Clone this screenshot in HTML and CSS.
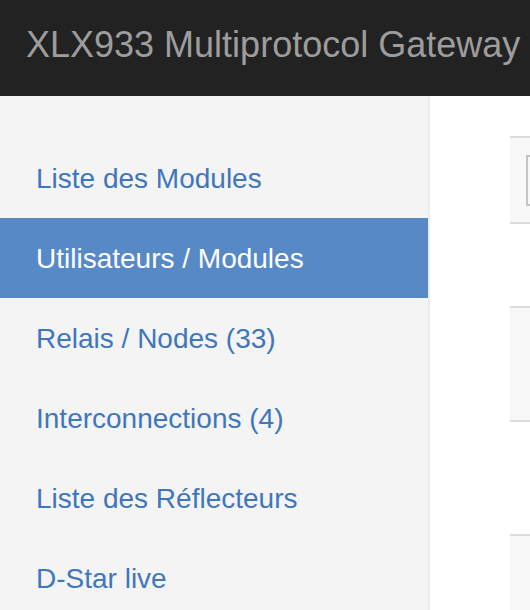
FILE: index.html
```html
<!DOCTYPE html>
<html lang="fr">

<head>
    <meta charset="UTF-8">
    <meta name="viewport" content="width=device-width, initial-scale=1.0">
    <title>XLX933 Multiprotocol Gateway</title>
    <link rel="stylesheet" href="styles.css">
</head>

<body>
    <div class="navbar">
        <a class="brand" href="#">XLX933 Multiprotocol Gateway</a>
    </div>
    <div class="page">
        <div class="sidebar">
            <ul class="nav">
                <li><a href="#">Liste des Modules</a></li>
                <li class="active"><a href="#">Utilisateurs / Modules</a></li>
                <li><a href="#">Relais / Nodes (33)</a></li>
                <li><a href="#">Interconnections (4)</a></li>
                <li><a href="#">Liste des Réflecteurs</a></li>
                <li><a href="#">D-Star live</a></li>
            </ul>
        </div>
        <div class="main">
            <table class="table">
                <tr class="row-head">
                    <td><div class="filter"></div></td>
                </tr>
                <tr class="row-short">
                    <td></td>
                </tr>
                <tr>
                    <td></td>
                </tr>
                <tr>
                    <td></td>
                </tr>
                <tr>
                    <td></td>
                </tr>
            </table>
        </div>
    </div>
</body>

</html>
```

FILE: styles.css
```css
html,
body {
    margin: 0;
    height: 100%;
    overflow: hidden;
}

body {
    font-family: "Liberation Sans", Arial, Helvetica, sans-serif;
    background: #fff;
}

.navbar {
    height: 96px;
    box-sizing: border-box;
    padding: 25px 26px 0;
    background: #222;
}

.brand {
    display: block;
    font-size: 36px;
    line-height: 40px;
    color: #9d9d9d;
    text-decoration: none;
    white-space: nowrap;
}

.page {
    display: flex;
    height: calc(100% - 96px);
}

.sidebar {
    flex: 0 0 428px;
    padding-top: 42px;
    background: #f4f4f4;
    border-right: 2px solid #ececec;
}

.nav {
    list-style: none;
    margin: 0;
    padding: 0;
}

.nav a {
    display: block;
    height: 80px;
    line-height: 81px;
    padding-left: 36px;
    font-size: 28px;
    color: #3f77bd;
    text-decoration: none;
    white-space: nowrap;
}

.nav .active a {
    background: #5689c5;
    color: #fff;
}

.main {
    flex: 1;
    overflow: hidden;
    padding: 40px 0 0 80px;
}

.table {
    width: 1000px;
    border-collapse: collapse;
    border-top: 2px solid #dcdcdc;
}

.table td {
    padding: 0;
    height: 112px;
    border-bottom: 2px solid #dcdcdc;
}

.table tr:nth-child(odd) td {
    background: #f8f8f8;
}

.table .row-head td {
    height: 84px;
    padding-left: 16px;
}

.table .row-short td {
    height: 82px;
}

.filter {
    width: 300px;
    height: 47px;
    border: 2px solid #c4c4c4;
}
```
